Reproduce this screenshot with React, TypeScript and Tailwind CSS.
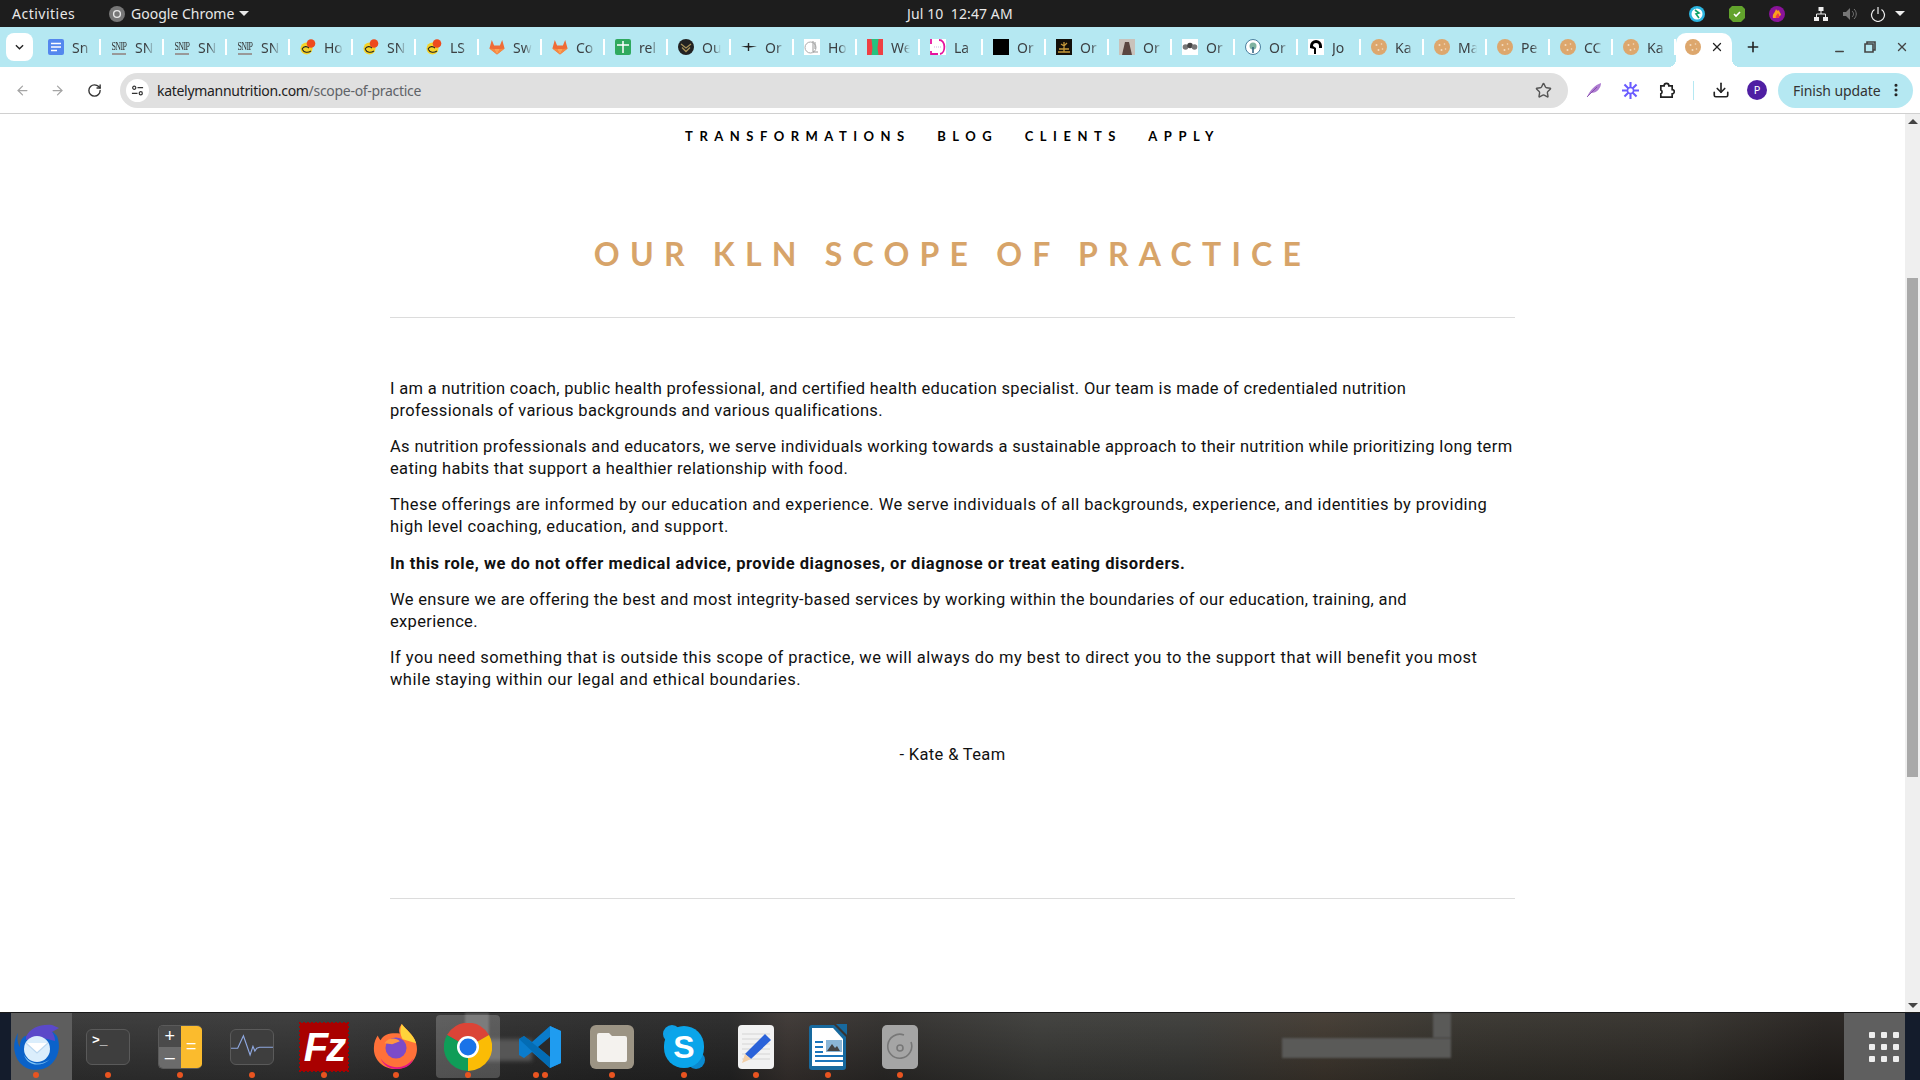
import { ArrowLeft, ArrowRight, Download, EllipsisVertical, Minus, Plus, RotateCw, Star, X } from "lucide-react";
import type { ReactNode } from "react";

const uiFont = "font-['Noto_Sans',sans-serif]";

function Cookie() {
  return (
    <svg viewBox="0 0 16 16" className="w-4 h-4 shrink-0">
      <circle cx="8" cy="8" r="8" fill="#dda76d" />
      <circle cx="5.5" cy="6" r="1" fill="#f3dcc0" />
      <circle cx="10.5" cy="5" r="0.8" fill="#f3dcc0" />
      <circle cx="7.5" cy="11" r="1" fill="#f3dcc0" />
      <circle cx="11.5" cy="10" r="0.8" fill="#f3dcc0" />
    </svg>
  );
}

function Favicon({ kind }: { kind: string }) {
  if (kind === "doc")
    return (
      <svg viewBox="0 0 16 16" className="w-4 h-4 shrink-0">
        <rect x="0" y="0" width="16" height="16" rx="2" fill="#5487ee" />
        <path d="M3 4.500h10M3 8h10M3 11.500h6" stroke="#fff" strokeWidth="1.600" />
      </svg>
    );
  if (kind === "snp")
    return (
      <div className="w-4 h-4 shrink-0 flex flex-col items-center">
        <span className="font-['Liberation_Serif',serif] text-[8px] tracking-[-0.6px] text-[#333] leading-[9px] whitespace-nowrap origin-top scale-y-150">SNIP</span>
        <span className="block w-3.5 h-[2px] mt-[5px] bg-[#999]" />
      </div>
    );
  if (kind === "smile")
    return (
      <svg viewBox="0 0 16 16" className="w-4 h-4 shrink-0">
        <circle cx="6.500" cy="9.500" r="6" fill="#f5d327" />
        <path d="M2 10c2-3 5-3 7-1M2 10c2 4 6 4 9 2" stroke="#222" strokeWidth="1.100" fill="none" />
        <circle cx="11" cy="4.500" r="4.300" fill="#ee4a1d" />
      </svg>
    );
  if (kind === "gitlab")
    return (
      <svg viewBox="0 0 16 16" className="w-4 h-4 shrink-0">
        <path d="M8 15.500.4 9.600 2.800 1l2.300 5.600h5.800L13.200 1l2.400 8.600z" fill="#ef6c36" />
        <path d="M8 15.500 5.100 10h5.800z" fill="#fba155" />
        <path d="M8 15.500 .4 9.600 5 10zM8 15.500l7.600-5.900L11 10z" fill="#f68a42" />
      </svg>
    );
  if (kind === "sheet")
    return (
      <svg viewBox="0 0 16 16" className="w-4 h-4 shrink-0">
        <rect width="16" height="16" rx="2" fill="#2fa95e" />
        <path d="M2 6h12M8 2v12" stroke="#fff" strokeWidth="1.500" />
      </svg>
    );
  if (kind === "badge")
    return (
      <svg viewBox="0 0 16 16" className="w-4 h-4 shrink-0">
        <circle cx="8" cy="8" r="8" fill="#222" />
        <path d="M3 5l5 4 5-4M4 8.500l4 4 4-4" stroke="#a8925a" strokeWidth="1.300" fill="none" />
      </svg>
    );
  if (kind === "bird")
    return (
      <svg viewBox="0 0 16 16" className="w-4 h-4 shrink-0">
        <path d="M0 7.500 7 6.800 16 7.500 9 8.500H6z" fill="#222" />
        <path d="M7.500 4v8" stroke="#222" strokeWidth="1.400" />
      </svg>
    );
  if (kind === "ring")
    return (
      <svg viewBox="0 0 16 16" className="w-4 h-4 shrink-0">
        <rect width="16" height="16" fill="#fff" />
        <circle cx="6.500" cy="8.500" r="5.500" stroke="#aaa" fill="none" />
        <path d="M9 2v11h5M11 3v7" stroke="#999" fill="none" />
      </svg>
    );
  if (kind === "red")
    return (
      <svg viewBox="0 0 16 16" className="w-4 h-4 shrink-0">
        <rect width="16" height="16" fill="#ef4044" />
        <path d="M4.500 0h7l-1 9 1 7h-7l1-7z" fill="#25c27f" />
      </svg>
    );
  if (kind === "pink")
    return (
      <svg viewBox="0 0 16 16" className="w-4 h-4 shrink-0">
        <rect width="16" height="16" fill="#fff" />
        <path d="M1 0v5M1 12v3h7M9 1c7 0 7 13 1 14" stroke="#e6129e" strokeWidth="1.800" fill="none" />
        <path d="M4 8h8" stroke="#c9b4e0" strokeWidth="1.200" strokeDasharray="1 1" />
      </svg>
    );
  if (kind === "black") return <div className="w-4 h-4 shrink-0 bg-black" />;
  if (kind === "gold")
    return (
      <svg viewBox="0 0 16 16" className="w-4 h-4 shrink-0">
        <rect width="16" height="16" fill="#14100a" />
        <path d="M2 13h12M8 13V3M5 5l3 2 3-3M3 10h10" stroke="#c79a3b" strokeWidth="1.300" fill="none" />
      </svg>
    );
  if (kind === "photo")
    return (
      <svg viewBox="0 0 16 16" className="w-4 h-4 shrink-0">
        <rect width="16" height="16" fill="#c9c2bb" />
        <path d="M3 16 6 3h4l3 13z" fill="#5a4640" />
      </svg>
    );
  if (kind === "flower")
    return (
      <svg viewBox="0 0 16 16" className="w-4 h-4 shrink-0">
        <rect width="16" height="16" fill="#fff" />
        <circle cx="3.500" cy="8" r="2.800" fill="#777" />
        <circle cx="8" cy="6.500" r="2.800" fill="#444" />
        <circle cx="12.500" cy="8" r="2.800" fill="#777" />
      </svg>
    );
  if (kind === "tree")
    return (
      <svg viewBox="0 0 16 16" className="w-4 h-4 shrink-0">
        <circle cx="8" cy="8" r="7.500" fill="#fff" stroke="#4a7f9e" />
        <circle cx="8" cy="7" r="3.500" fill="#7fb3a0" />
        <path d="M8 8v6" stroke="#2d5f7e" strokeWidth="1.500" />
      </svg>
    );
  if (kind === "jo")
    return (
      <svg viewBox="0 0 16 16" className="w-4 h-4 shrink-0">
        <rect width="16" height="16" fill="#fff" />
        <path d="M2 9V7a6 6 0 0 1 12 0v2h-3V7a3 3 0 0 0-6 0l3 2v6H6V10z" fill="#000" />
      </svg>
    );
  return <Cookie />;
}

const tabs: [string, string][] = [
  ["doc", "Sn"], ["snp", "SN"], ["snp", "SN"], ["snp", "SN"], ["smile", "Ho"], ["smile", "SN"], ["smile", "LS"],
  ["gitlab", "Sw"], ["gitlab", "Co"], ["sheet", "rel"], ["badge", "Ou"], ["bird", "Or"], ["ring", "Ho"], ["red", "We"],
  ["pink", "La"], ["black", "Or"], ["gold", "Or"], ["photo", "Or"], ["flower", "Or"], ["tree", "Or"], ["jo", "Jo"],
  ["cookie", "Ka"], ["cookie", "Ma"], ["cookie", "Pe"], ["cookie", "CC"], ["cookie", "Ka"],
];

function TopBar() {
  return (
    <div className={`h-[27px] bg-[#1d1d1d] flex items-center text-[14px] text-[#e8e8e8] relative ${uiFont}`}>
      <span className="ml-3 w-[97px] tracking-[0.5px]">Activities</span>
      <svg viewBox="0 0 16 16" className="w-[16px] h-[16px]">
        <circle cx="8" cy="8" r="8" fill="#777" />
        <circle cx="8" cy="8" r="3.400" fill="none" stroke="#e8e8e8" strokeWidth="1.400" />
      </svg>
      <span className="ml-[6px]">Google Chrome</span>
      <span className="ml-[5px] w-0 h-0 border-x-[5px] border-x-transparent border-t-[5px] border-t-[#e8e8e8]" />
      <span className="absolute left-[907px] top-[4px] leading-[19px] whitespace-pre tracking-[0.1px]">Jul 10  12:47 AM</span>
      <div className="ml-auto mr-[15px] flex items-center">
        <svg viewBox="0 0 16 16" className="w-4 h-4">
          <circle cx="8" cy="8" r="8" fill="#2bb5e0" />
          <circle cx="8" cy="8" r="5.500" fill="#fff" />
          <path d="M6 4l4 3-3 1 3 4" stroke="#11a36a" strokeWidth="1.600" fill="none" />
        </svg>
        <svg viewBox="0 0 16 16" className="w-4 h-4 ml-6">
          <path d="M3 0h10l3 3v9l-4 4H4l-4-4V3z" fill="#62a32c" />
          <path d="M5 8l2 2 4-4" stroke="#fff" strokeWidth="1.600" fill="none" />
        </svg>
        <svg viewBox="0 0 16 16" className="w-4 h-4 ml-6">
          <circle cx="8" cy="8" r="8" fill="#8a139a" />
          <path d="M4 12c-1-4 2-5 3-9 1 2 2 2 3 1 0 2 2 3 2 5l-4 3z" fill="#f9a01b" />
          <path d="M7 12c-1-2 1-3 2-5 1 2 2 3 1 5z" fill="#ef3b4a" />
        </svg>
        <svg viewBox="0 0 16 16" className="w-4 h-4 ml-[28px]" fill="#eee">
          <rect x="5.500" y="1" width="5" height="4" />
          <rect x="1" y="11" width="5" height="4" />
          <rect x="10" y="11" width="5" height="4" />
          <path d="M8 5v3M3.500 11V8h9v3" stroke="#eee" fill="none" />
        </svg>
        <svg viewBox="0 0 16 16" className="w-4 h-4 ml-[13px]">
          <path d="M1 6h3l4-4v12l-4-4H1z" fill="#777" />
          <path d="M10 5c2 2 2 4 0 6M12 3c3 3 3 7 0 10" stroke="#777" fill="none" />
        </svg>
        <svg viewBox="0 0 16 16" className="w-4 h-4 ml-[12px]">
          <path d="M4.500 3.500a6.500 6.500 0 1 0 7 0M8 1v7" stroke="#eee" strokeWidth="1.200" fill="none" />
        </svg>
        <span className="ml-[9px] w-0 h-0 border-x-[5px] border-x-transparent border-t-[5px] border-t-[#eee]" />
      </div>
    </div>
  );
}

function TabStrip() {
  return (
    <div className={`h-[40px] bg-[#b5e8f2] flex items-center text-[14px] text-[#3c4043] ${uiFont}`}>
      <div className="ml-[6px] mr-[5px] w-[27px] h-[28px] rounded-[8px] bg-white flex items-center justify-center">
        <svg viewBox="0 0 10 6" className="w-[9px] h-[6px]">
          <path d="M1 1l4 4 4-4" stroke="#222" strokeWidth="1.500" fill="none" />
        </svg>
      </div>
      {tabs.map(([kind, label], i) => (
        <div key={i} className="w-[63px] h-full shrink-0 flex items-center pl-[10px]">
          <Favicon kind={kind} />
          <span className="ml-2 w-[19px] overflow-hidden whitespace-nowrap [mask-image:linear-gradient(90deg,#000_60%,transparent)]">
            {label}
          </span>
          <span className="ml-auto w-[2px] h-[16px] bg-white" />
        </div>
      ))}
      <div className="relative w-[56px] h-[34px] mt-[6px] pb-[6px] bg-white rounded-t-[10px] flex items-center pl-[9px] shrink-0">
        <span className="absolute left-[-8px] bottom-0 w-2 h-2 bg-[radial-gradient(circle_at_0_0,#b5e8f2_8px,#fff_8px)]" />
        <span className="absolute right-[-8px] bottom-0 w-2 h-2 bg-[radial-gradient(circle_at_100%_0,#b5e8f2_8px,#fff_8px)]" />
        <Cookie />
        <X className="ml-[9px] w-[14px] h-[14px] text-[#222]" strokeWidth={2.2} />
      </div>
      <Plus className="ml-[13px] w-4 h-4 text-[#222]" strokeWidth={2.4} />
      <div className="ml-auto flex items-center text-[#444] mr-[11px] gap-[19px]">
        <Minus className="w-[13px] h-[13px] mt-[8px]" strokeWidth={2.5} />
        <svg viewBox="0 0 12 12" className="w-3 h-3 -ml-px">
          <path d="M3 3V1h8v8H9M1 3h8v8H1z" stroke="#444" strokeWidth="1.600" fill="none" />
        </svg>
        <X className="w-[14px] h-[14px]" strokeWidth={2.4} />
      </div>
    </div>
  );
}

function ToolBar() {
  return (
    <div className={`h-[47px] bg-white border-b border-[#d0d0d0] flex items-center ${uiFont}`}>
      <ArrowLeft className="ml-[15px] w-[15px] h-[15px] text-[#a5a5a5]" strokeWidth={2} />
      <ArrowRight className="ml-[20px] w-[15px] h-[15px] text-[#a5a5a5]" strokeWidth={2} />
      <RotateCw className="ml-[22px] w-[15px] h-[15px] text-[#333]" strokeWidth={2.2} />
      <div className="ml-[18px] w-[1448px] h-[35px] rounded-full bg-[#e0e0e0] flex items-center pl-[6px]">
        <div className="w-[23px] h-[23px] rounded-full bg-white flex items-center justify-center">
          <svg viewBox="0 0 14 14" className="w-[13px] h-[13px]">
            <circle cx="3.500" cy="4" r="1.700" fill="none" stroke="#333" strokeWidth="1.300" />
            <path d="M7 4h6M1 10h6" stroke="#333" strokeWidth="1.300" />
            <circle cx="10.500" cy="10" r="1.700" fill="none" stroke="#333" strokeWidth="1.300" />
          </svg>
        </div>
        <span className="ml-[8px] text-[14px] tracking-[-0.3px] text-[#222]">
          katelymannutrition.com<span className="text-[#5f6368]">/scope-of-practice</span>
        </span>
        <Star className="ml-auto mr-[16px] w-[17px] h-[17px] text-[#555]" strokeWidth={2} />
      </div>
      <svg viewBox="0 0 16 16" className="ml-[18px] w-4 h-4">
        <path d="M1 15C4 8 9 3 15 1c0 5-4 10-10 10z" fill="#ad7bd0" />
        <path d="M1 15 11 5" stroke="#7b3da3" strokeWidth="0.800" />
      </svg>
      <svg viewBox="0 0 18 18" className="ml-[20px] w-[17px] h-[17px]" stroke="#6a5cff" strokeWidth="2.200">
        <path d="M9 0v18M0 9h18M2.600 2.600l12.800 12.800M15.400 2.600 2.600 15.400" />
        <circle cx="9" cy="9" r="3.200" fill="#fff" strokeWidth="1.600" />
      </svg>
      <svg viewBox="0 0 18 18" className="ml-[19px] w-[17px] h-[17px]">
        <path d="M3 4h3.500a2.500 2.500 0 0 1 5 0H15v4a2.200 2.200 0 0 1 0 4.500V16H3v-3.500a2.200 2.200 0 0 0 0-4z" stroke="#222" strokeWidth="1.800" fill="none" />
      </svg>
      <span className="ml-[18px] w-px h-[19px] bg-[#b5e8f2]" />
      <Download className="ml-[18px] w-[18px] h-[18px] text-[#222]" strokeWidth={2.2} />
      <div className="ml-[17px] w-5 h-5 rounded-full bg-[#4f1fa3] text-white text-[11px] flex items-center justify-center">P</div>
      <div className="ml-[11px] w-[135px] h-[35px] rounded-full bg-[#b5e8f2] flex items-center pl-[15px] text-[14px] text-[#333] tracking-[-0.1px]">
        Finish update
        <EllipsisVertical className="ml-auto mr-[9px] w-4 h-4 text-[#222]" strokeWidth={2.6} />
      </div>
    </div>
  );
}

function Scrollbar() {
  return (
    <div className="w-[15px] bg-[#efefef] flex flex-col items-center shrink-0">
      <span className="mt-[5px] w-0 h-0 border-x-[5px] border-x-transparent border-b-[5px] border-b-[#444]" />
      <div className="mt-[154px] w-[11px] h-[499px] bg-[#a9a9a9]" />
      <span className="mt-auto mb-[4px] w-0 h-0 border-x-[5px] border-x-transparent border-t-[5px] border-t-[#444]" />
    </div>
  );
}

function Page() {
  const nav = ["TRANSFORMATIONS", "BLOG", "CLIENTS", "APPLY"];
  return (
    <div className="flex-1 bg-white overflow-hidden">
      <div className="flex justify-center gap-[26.5px] pt-[14px] font-['Lato',sans-serif] font-bold text-[13px] leading-[16px] tracking-[0.5em] text-black">
        {nav.map((n) => (
          <span key={n}>{n}</span>
        ))}
      </div>
      <div className="w-[1125px] ml-[390px] font-['Roboto',sans-serif] text-[16.5px] leading-[21.6px] text-[#111]">
        <h1 className="mt-[90px] text-center font-['Lato',sans-serif] font-bold text-[32px] leading-[40px] tracking-[0.32em] text-[#d7a469]">
          OUR KLN SCOPE OF PRACTICE
        </h1>
        <hr className="mt-[43px] border-[#dcdcdc]" />
        <div className="mt-[60px] flex flex-col gap-[15px] whitespace-nowrap">
          <p className="tracking-[0.32px]">
            I am a nutrition coach, public health professional, and certified health education specialist. Our team is made of credentialed nutrition
            <br />
            professionals of various backgrounds and various qualifications.
          </p>
          <p className="tracking-[0.34px]">
            As nutrition professionals and educators, we serve individuals working towards a sustainable approach to their nutrition while prioritizing long term
            <br />
            eating habits that support a healthier relationship with food.
          </p>
          <p className="tracking-[0.42px]">
            These offerings are informed by our education and experience. We serve individuals of all backgrounds, experience, and identities by providing
            <br />
            high level coaching, education, and support.
          </p>
          <p className="font-bold tracking-[0.53px]">In this role, we do not offer medical advice, provide diagnoses, or diagnose or treat eating disorders.</p>
          <p className="tracking-[0.34px]">
            We ensure we are offering the best and most integrity-based services by working within the boundaries of our education, training, and
            <br />
            experience.
          </p>
          <p className="tracking-[0.47px]">
            If you need something that is outside this scope of practice, we will always do my best to direct you to the support that will benefit you most
            <br />
            while staying within our legal and ethical boundaries.
          </p>
        </div>
        <p className="mt-[53px] text-center tracking-[0.34px]">- Kate &amp; Team</p>
        <hr className="mt-[133px] border-[#dcdcdc]" />
      </div>
    </div>
  );
}

function DockItem({ children, dots = 1, active }: { children: ReactNode; dots?: number; active?: boolean }) {
  return (
    <div className="relative w-[72px] h-full flex items-center justify-center shrink-0">
      {active && <div className="absolute left-1 right-1 top-[2px] bottom-[2px] rounded-[4px] bg-white/20" />}
      <div className="relative">{children}</div>
      <div className="absolute bottom-[2px] left-0 right-0 flex justify-center gap-[3px]">
        {Array.from({ length: dots }).map((_, i) => (
          <span key={i} className="w-[6px] h-[6px] rounded-full bg-[#e95420]" />
        ))}
      </div>
    </div>
  );
}

function Dock() {
  return (
    <div className="relative h-[68px] border-t border-[#1a1a1a] flex bg-[linear-gradient(90deg,#343434_0%,#363636_15%,#2e2e2e_24%,#282828_32%,#262626_38%,#3a3431_41%,#2e2c2a_46%,#3b3b38_54%,#3a3a37_62%,#40382f_69%,#35322c_75%,#312e29_88%,#231f1c_95%)]">
      <div className="absolute inset-0 bg-[linear-gradient(180deg,rgba(255,255,255,0.05),rgba(0,0,0,0.22))]" />
      <div className="absolute left-[470px] top-[26px] w-[62px] h-[22px] bg-[#565656] blur-[2px]" />
      <div className="absolute left-[465px] top-0 w-[24px] h-[28px] bg-[#5c5c5c] blur-[1px]" />
      <div className="absolute left-[1282px] top-[25px] w-[169px] h-[20px] bg-[#5a5a58] blur-[1px]" />
      <div className="absolute left-[1433px] top-0 w-[18px] h-[25px] bg-[#5a5a58] blur-[1px]" />
      <div className="absolute left-0 top-0 w-[11px] h-full bg-[#141c2c]" />
      <div className="absolute left-[11px] top-0 w-[61px] h-full bg-[#5e5e5e]" />
      <DockItem>
        <svg viewBox="0 0 48 48" className="w-12 h-12">
          <path d="M6 10C1 18 0 30 8 40c7 8 20 9 29 3 10-7 12-20 8-30l-4-4-28 4c-4 3-5 5-5 11-3-4-3-9-2-14z" fill="#0a62c9" />
          <path d="M14 14C18 5 28 1 40 2l7 3-7 4c2 3 3 5 3 9L27 14l-13 3z" fill="#5b49c9" />
          <circle cx="25" cy="26" r="13" fill="#dbeefc" />
          <path d="M14 20l11 10 11-10" stroke="#bcd8f0" strokeWidth="1.200" fill="#fff" />
          <path d="M12 32c6 10 18 11 26 4-8 8-22 8-26-4z" fill="#7fc4f5" />
        </svg>
      </DockItem>
      <DockItem>
        <div className="w-[44px] h-[36px] rounded-[6px] bg-[#3e3e3e] border border-[#5a5a5a] text-white font-['Liberation_Mono',monospace] text-[13px] font-bold leading-[14px] pl-[5px] pt-[4px]">
          &gt;_
        </div>
      </DockItem>
      <DockItem>
        <div className="w-[44px] h-[44px] rounded-[5px] overflow-hidden flex border border-[#5a5a5a] border-r-0">
          <div className="w-[22px] flex flex-col text-white text-[18px] leading-none font-['Liberation_Sans',sans-serif]">
            <div className="h-[22px] flex items-center justify-center bg-[#4a4a4a]">+</div>
            <div className="h-[22px] flex items-center justify-center bg-[#6b6b6b]">–</div>
          </div>
          <div className="w-[22px] bg-[#fbbb2d] text-white text-[18px] flex items-center justify-center font-['Liberation_Sans',sans-serif]">=</div>
        </div>
      </DockItem>
      <DockItem>
        <div className="w-[44px] h-[36px] rounded-[6px] bg-[#3e3e3e] border border-[#5a5a5a] flex items-center">
          <svg viewBox="0 0 44 30" className="w-full">
            <path d="M0 17h7l6-13 7 20 3-9 2 5 2-3 3-1h14" stroke="#8fa8e0" strokeWidth="1.200" fill="none" />
          </svg>
        </div>
      </DockItem>
      <DockItem>
        <div className="w-[48px] h-[48px] bg-[#a90000] outline-2 outline-dotted outline-[#a90000] -outline-offset-1 flex items-center justify-center font-['Liberation_Sans',sans-serif] italic font-bold text-white text-[40px] tracking-[-2px]">
          Fz
        </div>
      </DockItem>
      <DockItem>
        <svg viewBox="0 0 48 48" className="w-[46px] h-[48px]">
          <path d="M30 0c4 6 12 10 15 20 4 14-6 27-21 27C10 47 0 37 1 24c0-5 2-9 4-12 1 3 2 4 3 5 3-7 12-8 20-7-2-4 0-7 2-10z" fill="#ff7139" />
          <path d="M30 0c4 6 12 10 15 20l-14-4c-3-5-3-11-1-16z" fill="#ffd43b" />
          <path d="M8 36c6 10 24 14 34 0-2 8-10 11-18 11-7 0-13-4-16-11z" fill="#e31587" />
          <circle cx="24" cy="25" r="11" fill="#7b4bc9" />
          <path d="M12 20c4-6 12-6 16-2l-8 3z" fill="#ff9640" />
        </svg>
      </DockItem>
      <DockItem active>
        <svg viewBox="0 0 48 48" className="w-12 h-12">
          <path d="M24 24 3 12A24 24 0 0 1 45 12z" fill="#db4437" />
          <path d="M24 24 45 12A24 24 0 0 1 24 48z" fill="#fbbc05" />
          <path d="M24 24 24 48A24 24 0 0 1 3 12z" fill="#0f9d58" />
          <circle cx="24" cy="24" r="11" fill="#fff" />
          <circle cx="24" cy="24" r="8.500" fill="#1a73e8" />
        </svg>
      </DockItem>
      <DockItem dots={2}>
        <svg viewBox="0 0 42 42" className="w-[42px] h-[42px]">
          <path d="M31 0 42 5v32l-11 5L13 26l-8 6-5-3v-16l5-3 8 6z" fill="#0a7ccc" />
          <path d="M31 0 42 5v32l-11 5z" fill="#1f9cf0" />
          <path d="M31 11 19 21l12 10z" fill="#2a2a2a" />
          <path d="M0 13l5-3 26 21v11L0 13z" fill="#0065a9" opacity="0.7" />
        </svg>
      </DockItem>
      <DockItem>
        <div className="w-[44px] h-[44px] rounded-[6px] bg-[#9c9484] flex items-center justify-center">
          <svg viewBox="0 0 32 32" className="w-8 h-8">
            <path d="M1 4a2 2 0 0 1 2-2h10l3 3h13a2 2 0 0 1 2 2v22a2 2 0 0 1-2 2H3a2 2 0 0 1-2-2z" fill="#f4f2ee" />
          </svg>
        </div>
      </DockItem>
      <DockItem>
        <div className="relative w-[42px] h-[44px] flex items-center justify-center text-white font-['Liberation_Sans',sans-serif] font-bold text-[32px] leading-none">
          <span className="absolute left-0 top-0 w-[18px] h-[18px] rounded-full bg-[#0fa0e6]" />
          <span className="absolute right-0 bottom-0 w-[18px] h-[18px] rounded-full bg-[#0b8ad0]" />
          <span className="absolute inset-[1px] rounded-full bg-[#0aa5ea]" />
          <span className="relative">S</span>
        </div>
      </DockItem>
      <DockItem>
        <div className="w-[36px] h-[44px] rounded-[4px] bg-[#f2f2f2] flex items-center justify-center">
          <svg viewBox="0 0 36 44" className="w-[36px] h-[44px]">
            <path d="M4 9h28M4 14h28M4 19h28M4 24h28M4 29h28M4 34h28" stroke="#d4d4d4" />
            <path d="M27 9 33 15 13 34 7 29z" fill="#2a62d9" />
            <path d="M7 29l6 5-9 4z" fill="#f2cfa8" />
          </svg>
        </div>
      </DockItem>
      <DockItem>
        <svg viewBox="0 0 38 46" className="w-[38px] h-[46px]">
          <path d="M3 1h22l12 12v30a3 3 0 0 1-3 3H3a3 3 0 0 1-3-3V4a3 3 0 0 1 3-3z" fill="#17699e" />
          <path d="M3 4h21l10 11v27H3z" fill="#fff" />
          <path d="M27 0h11v11z" fill="#17699e" />
          <path d="M6 18h8M6 23h8M6 28h8M6 32h28M6 37h28" stroke="#1b75bb" strokeWidth="2.200" />
          <rect x="17" y="16" width="16" height="12" fill="#8ab5d6" />
          <path d="M18 27l5-7 3 4 2-2 3 5z" fill="#444" />
        </svg>
      </DockItem>
      <DockItem>
        <div className="w-[36px] h-[44px] rounded-[5px] bg-[#a5a5a5] flex items-center justify-center">
          <svg viewBox="0 0 28 28" className="w-[28px] h-[28px]">
            <path d="M18 2a12 12 0 1 0 7 7" stroke="#777" strokeWidth="1.600" fill="none" />
            <circle cx="14" cy="15" r="3" stroke="#777" strokeWidth="1.600" fill="none" />
          </svg>
        </div>
      </DockItem>
      <div className="absolute left-[1844px] top-0 w-[61px] h-full bg-[#5f5f5f] grid grid-cols-3 gap-x-[6px] gap-y-[6px] content-center justify-end pl-[25px] pr-[6px]">
        {Array.from({ length: 9 }).map((_, i) => (
          <span key={i} className="w-[6px] h-[6px] rounded-[1px] bg-[#eee]" />
        ))}
      </div>
      <div className="absolute left-[1905px] top-0 w-[15px] h-full bg-[#141c2c]" />
    </div>
  );
}

export default function App() {
  return (
    <div className="w-[1920px] h-[1080px] flex flex-col overflow-hidden">
      <TopBar />
      <TabStrip />
      <ToolBar />
      <div className="flex-1 flex min-h-0">
        <Page />
        <Scrollbar />
      </div>
      <Dock />
    </div>
  );
}
